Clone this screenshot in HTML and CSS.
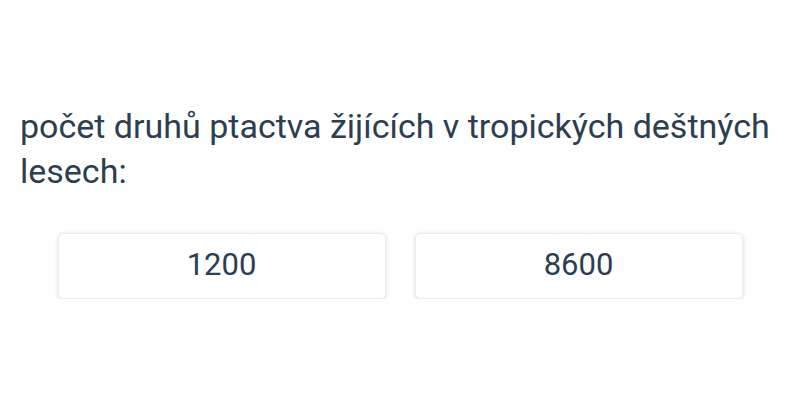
FILE: index.html
```html
<!DOCTYPE html>
<html lang="cs">
<head>
<meta charset="utf-8">
<link rel="stylesheet" href="styles.css">
</head>
<body>
<main class="quiz">
  <p class="question">počet druhů ptactva žijících v tropických deštných lesech:</p>
  <div class="options">
    <button class="option">1200</button>
    <button class="option">8600</button>
  </div>
</main>
</body>
</html>
```

FILE: styles.css
```css
html, body {
  margin: 0;
  padding: 0;
  background: #ffffff;
}
body {
  font-family: Roboto, "Noto Sans", sans-serif;
  color: #2c3e50;
}
.quiz {
  padding: 104px 20px 0 20px;
}
.question {
  margin: 0;
  font-size: 34px;
  line-height: 45px;
}
.options {
  display: flex;
  justify-content: center;
  gap: 29px;
  margin-top: 39px;
}
.option {
  width: 328px;
  height: 66px;
  background: #fff;
  border: 1px solid #ececec;
  border-radius: 5px;
  box-shadow: 0 1px 4px rgba(0,0,0,0.14);
  font-family: Roboto, "Noto Sans", sans-serif;
  font-size: 31px;
  color: #2c3e50;
  padding: 0 0 3px 0;
}
```
